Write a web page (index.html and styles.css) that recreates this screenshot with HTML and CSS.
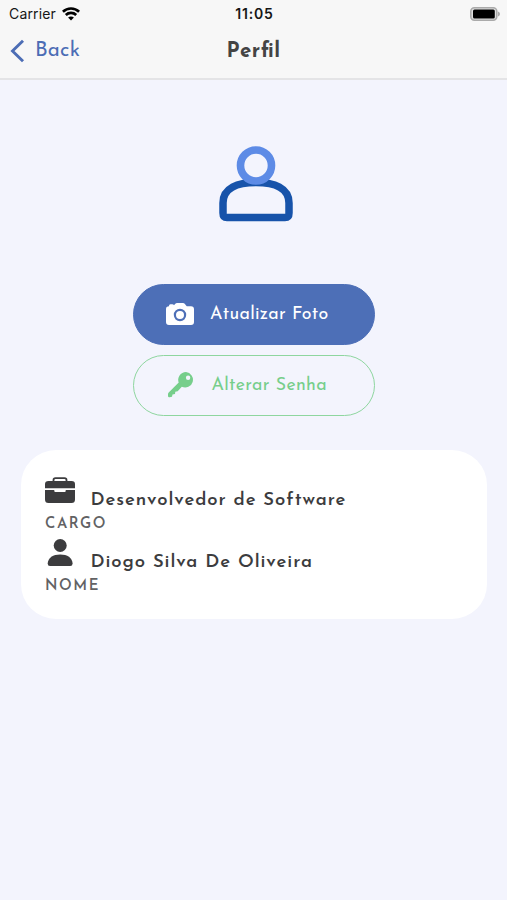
FILE: index.html
```
<!DOCTYPE html>
<html lang="pt-BR">
<head>
<meta charset="utf-8">
<meta name="viewport" content="width=device-width, initial-scale=1">
<title>Perfil</title>
<link rel="stylesheet" href="styles.css">
</head>
<body>
<header class="header">
  <div class="status">
    <div class="carrier"><span>Carrier</span>
      <svg class="wifi" width="18" height="14" viewBox="0 0 18 14" fill="none" stroke="#000" stroke-width="2.7"><path d="M.9 4.700C5.400.4 12.600.4 17.100 4.700"/><path d="M3.800 8c2.900-2.800 7.500-2.800 10.400 0"/><path d="M9 13.500 6.100 10.600c1.600-1.500 4.200-1.500 5.800 0z" fill="#000" stroke="none"/></svg>
    </div>
    <time class="clock">11:05</time>
    <svg class="battery" width="30" height="14" viewBox="0 0 30 14"><rect x=".8" y=".8" width="26" height="12.4" rx="3.6" fill="#e0e0e0" stroke="#aaa" stroke-width="1.6"/><rect x="3" y="2.5" width="21.8" height="9" rx="1.5"/><path d="M28 4.6q2 .8 2 2.4t-2 2.4z" fill="#aaa"/></svg>
  </div>
  <nav class="nav">
    <a class="back"><svg width="15" height="24" viewBox="0 0 15 24" fill="none" stroke="#4c6db5" stroke-width="2.9"><path d="M13 1.8 2.5 12 13 22.2"/></svg><span>Back</span></a>
    <h1 class="title">Per<span class="ligature">fi</span>l</h1>
  </nav>
</header>
<main class="main">
  <svg class="avatar" width="74" height="77" viewBox="0 0 74 77" fill="none"><path d="M4 67V57C4 42 19 36.500 37 36.500S70 42 70 57V67Q70 71.500 66 71.500H8Q4 71.500 4 67Z" stroke="#1753aa" stroke-width="7.500"/><circle cx="37" cy="19.500" r="15.500" stroke="#5d8be6" stroke-width="7.600"/></svg>
  <div class="actions">
    <button class="button primary"><svg width="28" height="22" viewBox="0 0 28 22"><path fill="#fff" fill-rule="evenodd" d="M3 2.800Q3 1.300 4.400 1.300H6.300Q7.600 1.300 8 2.300L9.300 .8Q10 0 11 0H17Q18 0 18.700 .8L20.300 2.800Q20.700 3.300 21.500 3.300H25Q28 3.300 28 6.300V19Q28 22 25 22H3Q0 22 0 19V6Q0 3.500 3 3.300ZM14 5.800A6.200 6.200 0 1 0 14 18.200A6.200 6.200 0 1 0 14 5.800ZM14 8A4 4 0 1 1 14 16A4 4 0 1 1 14 8Z"/></svg><span>Atualizar Foto</span></button>
    <button class="button outline"><svg width="26" height="26" viewBox="0 0 26 26"><path fill="#76ce8b" fill-rule="evenodd" d="M18 0A7.800 7.800 0 0 0 10.700 10.600L.7 20.600Q0 21.300 0 22.300V24Q0 25.500 1.700 25.200L4 24.800L4.500 22.500L7 22L7.300 19.700L9.700 19.200L13.800 14.800A7.800 7.800 0 1 0 18 0ZM20.100 3.600A2.200 2.200 0 1 1 20.100 8A2.200 2.200 0 1 1 20.100 3.600Z"/></svg><span>Alterar Senha</span></button>
  </div>
  <section class="card">
    <div class="field">
      <div class="value"><svg width="30" height="27" viewBox="0 0 30 27" fill="#3c3c3e"><path d="M8.500 5V3Q8.500 1.200 10.500 1.200H19.500Q21.500 1.200 21.500 3V5" fill="none" stroke="#3c3c3e" stroke-width="1.800"/><path d="M0 11.300V7Q0 4 3.500 4H26.500Q30 4 30 7V11.300Z"/><path d="M0 13H9.300V14Q9.300 15 10.300 15H19.700Q20.700 15 20.700 14V13H30V22.500Q30 26 26.500 26H3.500Q0 26 0 22.500Z"/></svg><span>Desenvolvedor de Software</span></div>
      <div class="label">CARGO</div>
    </div>
    <div class="field">
      <div class="value"><svg width="30" height="27" viewBox="0 0 30 27" fill="#3c3c3e"><circle cx="15.200" cy="6.500" r="6.500"/><path d="M2.700 24.500C3 18.800 8 15.500 15.200 15.500S27.300 18.800 27.600 24.500Q27.600 27 25.200 27H5Q2.700 27 2.700 24.500Z"/></svg><span>Diogo Silva De Oliveira</span></div>
      <div class="label">NOME</div>
    </div>
  </section>
</main>
</body>
</html>
```
FILE: styles.css
```
* { box-sizing: border-box; }
body { margin: 0; min-height: 900px; background: #f3f4fd; color: #3c3c3e; font-family: "Josefin Sans", Lato, sans-serif; white-space: nowrap; }
.header { height: 80px; background: #f7f7f7; border-bottom: 2px solid #e4e4e6; }
.status { display: grid; grid-template-columns: 1fr auto 1fr; height: 27px; padding: 0 7px 0 9px; align-items: center; font-family: Inter, sans-serif; font-size: 14px; color: #161616; }
.carrier { display: flex; align-items: center; gap: 6px; letter-spacing: .15px; }
.clock { font-weight: 600; letter-spacing: .8px; }
.battery { justify-self: end; }
.nav { display: grid; grid-template-columns: 1fr auto 1fr; height: 47px; padding: 0 10px; align-items: center; }
.back { display: flex; align-items: center; gap: 10px; color: #4c6db5; font-size: 20.5px; letter-spacing: .2px; }
.back span { padding-top: 1px; }
.title { margin: 0; font-size: 20.5px; font-weight: 700; letter-spacing: .5px; color: #444; padding-top: 2px; }
.ligature { letter-spacing: 0; margin-right: .5px; }
.main { padding: 66px 20px 0 21px; display: flex; flex-direction: column; align-items: center; }
.avatar { display: block; margin-left: 3px; }
.actions { display: flex; flex-direction: column; gap: 10px; margin-top: 61px; width: 242px; }
.button { display: flex; align-items: center; height: 61px; border-radius: 31px; padding: 0 0 1px 32px; font: 400 17.8px "Josefin Sans", Lato, sans-serif; letter-spacing: .3px; border: 1.5px solid; }
.primary { background: #4d6fb7; border-color: #4d6fb7; color: #fff; gap: 16px; }
.outline { background: transparent; border-color: #8ed69f; color: #76ce8b; padding-left: 34px; gap: 17.5px; }
.card { width: 100%; height: 169px; margin-top: 34px; padding: 27px 24px; border-radius: 35px; background: #fff; }
.field { height: 62px; }
.value { display: flex; height: 36px; gap: 15.5px; font-size: 18.5px; font-weight: 600; letter-spacing: .94px; line-height: 24px; }
.value span { padding-top: 12px; }
.label { font-size: 14.8px; font-weight: 600; letter-spacing: 1.6px; line-height: 24px; color: #626264; }
```
